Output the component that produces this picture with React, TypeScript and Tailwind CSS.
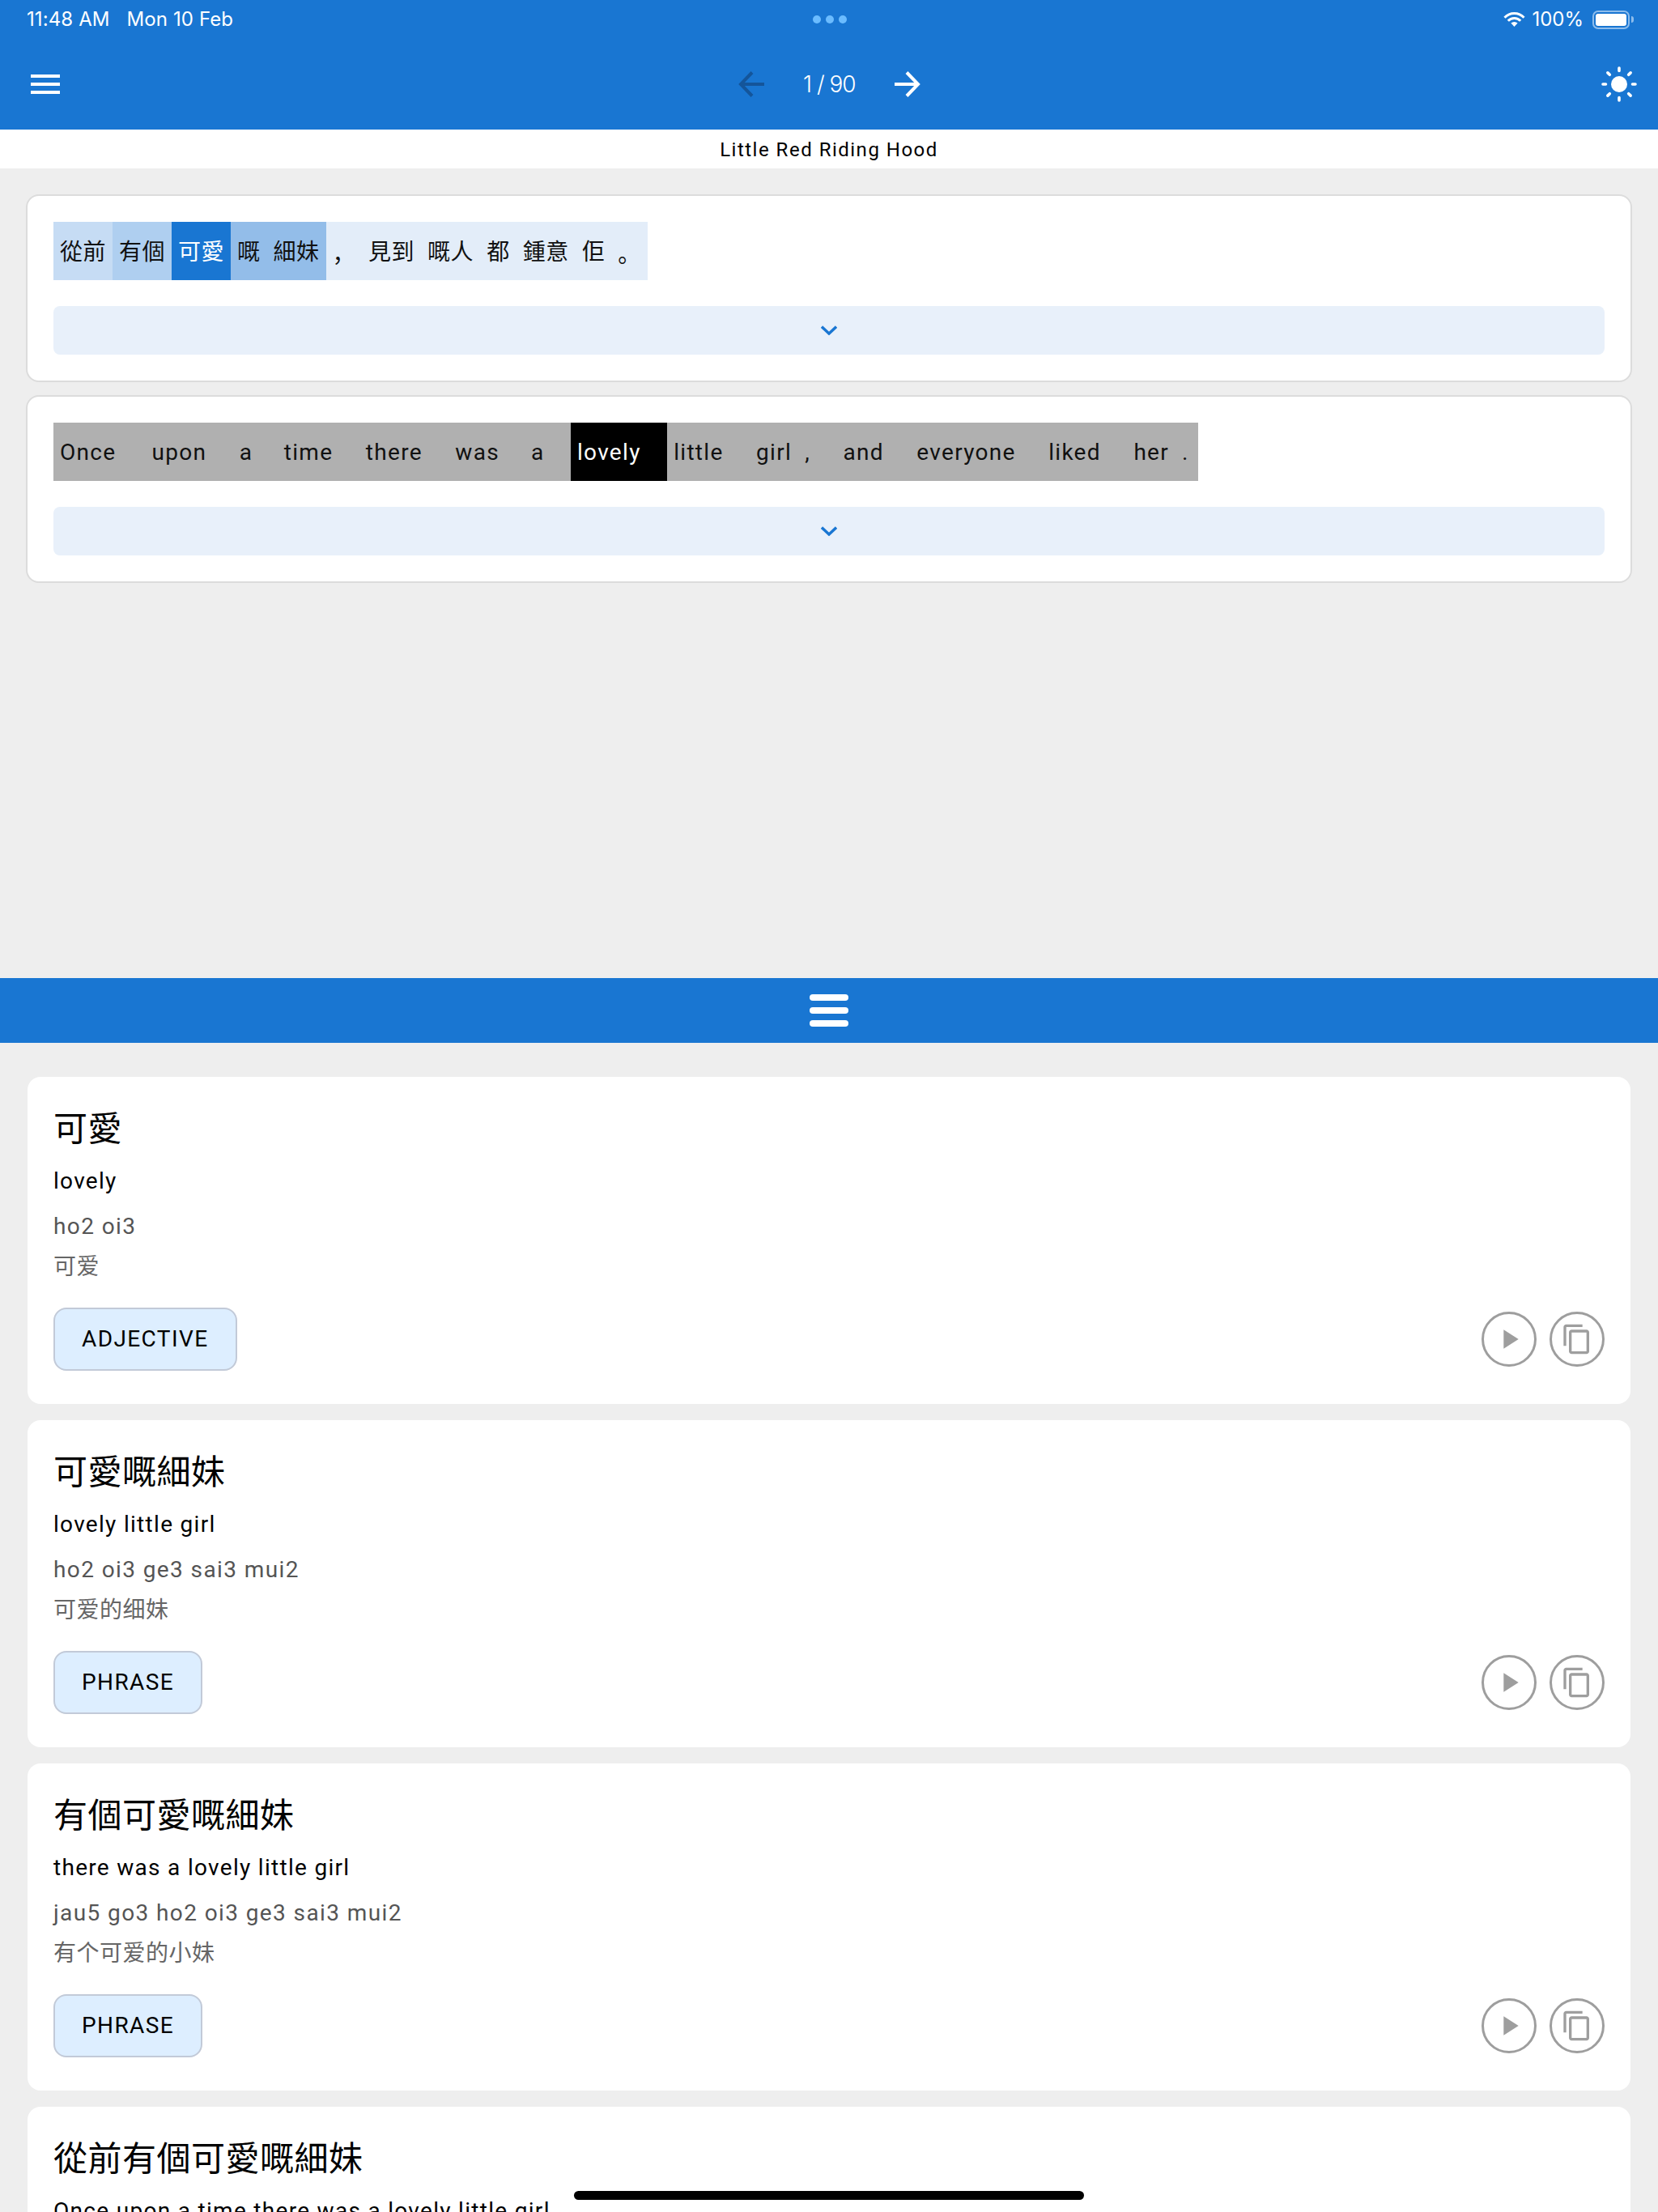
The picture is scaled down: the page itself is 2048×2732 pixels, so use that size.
/**
 * Reader screen: a sentence pair with tappable tokens, and the list of
 * dictionary entries that match the selected word.
 */

const SANS = 'font-["Roboto","Noto_Sans_CJK_TC",sans-serif]';
const PUNCTUATION = 'font-["Noto_Sans_CJK_SC",sans-serif]';

interface Token {
  text: string;
  className: string;
}

interface DictEntry {
  word: string;
  meaning: string;
  jyutping?: string;
  simplified?: string;
  kind?: string;
}

const chineseTokens: Token[] = [
  { text: '從前', className: 'bg-[#c6dcf4]' },
  { text: '有個', className: 'bg-[#afcff0]' },
  { text: '可愛', className: 'bg-[#1976d2] text-white' },
  { text: '嘅', className: 'bg-[#93bde9]' },
  { text: '細妹', className: 'bg-[#93bde9]' },
  { text: '，', className: `bg-[#e3edf9] ${PUNCTUATION}` },
  { text: '見到', className: 'bg-[#e3edf9]' },
  { text: '嘅人', className: 'bg-[#e3edf9]' },
  { text: '都', className: 'bg-[#e3edf9]' },
  { text: '鍾意', className: 'bg-[#e3edf9]' },
  { text: '佢', className: 'bg-[#e3edf9]' },
  { text: '。', className: `bg-[#e3edf9] ${PUNCTUATION}` },
];

const englishWords = [
  { text: 'Once', pad: 'pr-9' },
  { text: 'upon', pad: 'pr-[32.5px]' },
  { text: 'a', pad: 'pr-[30.5px]' },
  { text: 'time', pad: 'pr-[32.5px]' },
  { text: 'there', pad: 'pr-[32.5px]' },
  { text: 'was', pad: 'pr-[31px]' },
  { text: 'a', pad: 'pr-[32.5px]' },
  { text: 'lovely', pad: 'pr-[32.5px]', selected: true },
  { text: 'little', pad: 'pr-[32.5px]' },
  { text: 'girl', pad: 'pr-2' },
  { text: ',', pad: 'pr-[32.5px]' },
  { text: 'and', pad: 'pr-[32.5px]' },
  { text: 'everyone', pad: 'pr-[32.5px]' },
  { text: 'liked', pad: 'pr-[32.5px]' },
  { text: 'her', pad: 'pr-2' },
  { text: '.', pad: 'pr-[11px]' },
];

const entries: DictEntry[] = [
  { word: '可愛', meaning: 'lovely', jyutping: 'ho2 oi3', simplified: '可爱', kind: 'ADJECTIVE' },
  { word: '可愛嘅細妹', meaning: 'lovely little girl', jyutping: 'ho2 oi3 ge3 sai3 mui2', simplified: '可爱的细妹', kind: 'PHRASE' },
  { word: '有個可愛嘅細妹', meaning: 'there was a lovely little girl', jyutping: 'jau5 go3 ho2 oi3 ge3 sai3 mui2', simplified: '有个可爱的小妹', kind: 'PHRASE' },
  // Only the top of this one is on screen
  { word: '從前有個可愛嘅細妹', meaning: 'Once upon a time there was a lovely little girl' },
];

function WifiIcon() {
  return (
    <svg width="27" height="18" viewBox="0 0 27 18" fill="none" stroke="white" strokeWidth="3">
      <path d="M1.5 6.75A16.5 16.5 0 0 1 25.5 6.75" />
      <path d="M5.8 10.84A10.5 10.5 0 0 1 21.2 10.84" />
      <path d="M13.5 18L9.4 13.6A6 6 0 0 1 17.6 13.6Z" fill="white" stroke="none" />
    </svg>
  );
}

function SunIcon() {
  return (
    <svg width="44" height="44" viewBox="0 0 44 44" stroke="white" strokeWidth="3.6" strokeLinecap="round">
      <circle cx="22" cy="22" r="10" fill="white" stroke="none" />
      <path d="M22 2v3.5M22 38.5V42M2 22h3.5M38.5 22H42M7.86 7.86l2.47 2.47M33.67 33.67l2.47 2.47M7.86 36.14l2.47-2.47M33.67 10.33l2.47-2.47" />
    </svg>
  );
}

function Chevron() {
  return (
    <svg width="20" height="12" viewBox="0 0 20 12" fill="none" stroke="#1976d2" strokeWidth="3.4">
      <path d="M1 1.5l9 8.5 9-8.5" />
    </svg>
  );
}

function Expander() {
  return (
    <div className="h-[60px] rounded-lg bg-[#e8f0fa] flex items-center justify-center">
      <Chevron />
    </div>
  );
}

function Entry({ word, meaning, jyutping, simplified, kind }: DictEntry) {
  return (
    <div className="h-[404px] shrink-0 rounded-2xl bg-white px-8 pt-8">
      <div className="h-[60px] text-[42px] leading-[66px] tracking-[0.5px] text-black">{word}</div>
      <div className="mt-[17px] h-10 text-[28px] leading-10 tracking-[1.3px] text-black">{meaning}</div>
      {jyutping && (
        <div className="mt-4 h-10 text-[28px] leading-10 tracking-[1.4px] text-[#555555]">{jyutping}</div>
      )}
      {simplified && (
        <div className="mt-2 h-10 text-[28px] leading-[43px] tracking-[0.5px] text-[#666666]">{simplified}</div>
      )}
      {kind && (
        <div className="mt-8 flex items-center justify-between">
          <div className="h-[78px] rounded-2xl border-2 border-[#c2cad8] bg-[#ddeeff] px-[33px] flex items-center text-[28px] tracking-[1.4px] text-black">
            {kind}
          </div>
          <div className="flex gap-4">
            <button className="size-[68px] rounded-full border-[3px] border-[#9e9e9e] flex items-center justify-center">
              <svg width="40" height="40" viewBox="0 0 24 24" fill="#9e9e9e">
                <path d="M8 5v14l11-7z" />
              </svg>
            </button>
            <button className="size-[68px] rounded-full border-[3px] border-[#9e9e9e] flex items-center justify-center">
              <svg width="40" height="40" viewBox="0 0 24 24" fill="#9e9e9e">
                <path d="M16 1H4c-1.1 0-2 .9-2 2v14h2V3h12V1zm3 4H8c-1.1 0-2 .9-2 2v14c0 1.1.9 2 2 2h11c1.1 0 2-.9 2-2V7c0-1.1-.9-2-2-2zm0 16H8V7h11v14z" />
              </svg>
            </button>
          </div>
        </div>
      )}
    </div>
  );
}

export default function App() {
  return (
    <div className={`relative w-[2048px] h-[2732px] overflow-hidden bg-[#eeeeee] flex flex-col ${SANS}`}>
      {/* Status bar */}
      <div className="h-12 shrink-0 bg-[#1976d2] pl-[33px] pr-8 grid grid-cols-[1fr_auto_1fr] items-center text-white font-['Inter','Roboto',sans-serif] text-[24px]">
        <div className="flex gap-[21px] tracking-[0.1px]">
          <span>11:48 AM</span>
          <span>Mon 10 Feb</span>
        </div>
        <div className="flex gap-1.5">
          <span className="size-2.5 rounded-full bg-[#6bbcff]" />
          <span className="size-2.5 rounded-full bg-[#6bbcff]" />
          <span className="size-2.5 rounded-full bg-[#6bbcff]" />
        </div>
        <div className="flex items-center justify-end gap-2 -mr-[2px]">
          <WifiIcon />
          <span className="mr-[3px]">100%</span>
          <div className="flex items-center gap-[2px]">
            <div className="w-[46px] h-[23px] rounded-[7px] border-2 border-[#8ebdec] p-[2px]">
              <div className="h-full rounded-[3px] bg-white" />
            </div>
            <div className="w-[3px] h-2 rounded-r-sm bg-[#8ebdec]" />
          </div>
        </div>
      </div>

      {/* App bar */}
      <div className="h-[112px] shrink-0 bg-[#1976d2] px-[26px] grid grid-cols-[1fr_auto_1fr] items-center text-white">
        <svg className="ml-3" width="36" height="24" viewBox="0 0 18 12" fill="white">
          <path d="M0 12h18v-2H0v2zm0-5h18V5H0v2zM0 0v2h18V0H0z" />
        </svg>
        <div className="flex items-center gap-12">
          <svg width="32" height="32" viewBox="0 0 32 32" fill="none" stroke="#14559a" strokeWidth="4">
            <path d="M32 16H3M17 1.5L3 16l14 14.5" />
          </svg>
          <span className="w-16 text-center text-[28px] tracking-[-1px] whitespace-nowrap font-['Inter','Roboto',sans-serif] font-light">1 / 90</span>
          <svg className="translate-x-px" width="32" height="32" viewBox="0 0 32 32" fill="none" stroke="white" strokeWidth="4">
            <path d="M0 16h29M15 1.5L29 16 15 30.5" />
          </svg>
        </div>
        <div className="flex justify-end">
          <SunIcon />
        </div>
      </div>

      {/* Story title */}
      <div className="h-12 shrink-0 bg-white pt-[2px] flex items-center justify-center text-[24px] tracking-[1.5px] text-black">
        Little Red Riding Hood
      </div>

      {/* Sentences */}
      <div className="h-[1000px] shrink-0 px-8 pt-8 flex flex-col gap-4">
        <div className="rounded-2xl border-2 border-[#dcdcdc] bg-white p-8 flex flex-col gap-8">
          <div className="flex h-[72px]">
            {chineseTokens.map((token, i) => (
              <span key={i} className={`px-2 pt-1 flex items-center text-[28px] tracking-[0.5px] text-[#111111] ${token.className}`}>
                {token.text}
              </span>
            ))}
          </div>
          <Expander />
        </div>
        <div className="rounded-2xl border-2 border-[#dcdcdc] bg-white p-8 flex flex-col gap-8">
          <div className="flex h-[72px]">
            {englishWords.map((word, i) => (
              <span
                key={i}
                className={`pl-2 pt-[2px] flex items-center text-[28px] tracking-[1.3px] ${word.pad} ${word.selected ? 'bg-black text-white' : 'bg-[#b0b0b0] text-[#111111]'}`}
              >
                {word.text}
              </span>
            ))}
          </div>
          <Expander />
        </div>
      </div>

      {/* Panel divider */}
      <div className="h-20 shrink-0 bg-[#1976d2] flex flex-col items-center justify-center gap-2">
        <span className="w-12 h-2 rounded-full bg-white" />
        <span className="w-12 h-2 rounded-full bg-white" />
        <span className="w-12 h-2 rounded-full bg-white" />
      </div>

      {/* Dictionary entries */}
      <div className="flex-1 min-h-0 overflow-hidden px-[34px] pt-[42px] flex flex-col gap-5">
        {entries.map((entry) => (
          <Entry key={entry.word} {...entry} />
        ))}
      </div>

      {/* Home indicator */}
      <div className="absolute left-[709px] top-[2706px] w-[630px] h-[11px] rounded-full bg-black" />
    </div>
  );
}
